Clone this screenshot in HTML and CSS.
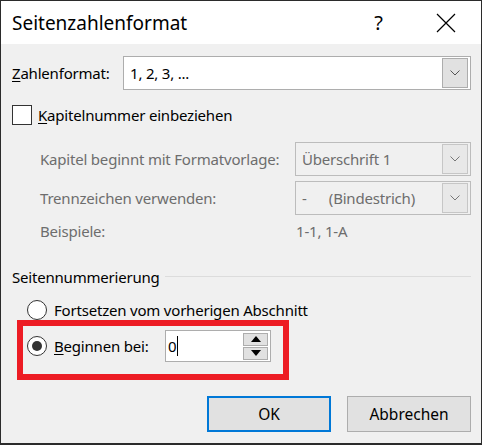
FILE: index.html
```html
<!DOCTYPE html>
<html lang="de">
<head>
<meta charset="UTF-8">
<title>Seitenzahlenformat</title>
<link rel="stylesheet" href="styles.css">
</head>
<body>
    <div class="window">
        <div class="titlebar">
            <span class="title">Seitenzahlenformat</span>
            <span class="help">?</span>
            <svg class="close" width="20" height="20" viewBox="0 0 20 20">
                <path d="M1 1 L19 19 M19 1 L1 19" stroke="#000" stroke-width="1.2" fill="none"/>
            </svg>
        </div>

        <div class="content">
            <div class="row row-format">
                <span class="label-main"><u>Z</u>ahlenformat:</span>
                <div class="combo">
                    <span class="combo-text">1, 2, 3, ...</span>
                    <span class="combo-btn">
                        <svg width="10" height="6" viewBox="0 0 10 6"><path d="M0.5 0.5 L5 5 L9.5 0.5" stroke="#555" fill="none"/></svg>
                    </span>
                </div>
            </div>

            <div class="row row-check">
                <span class="checkbox"></span>
                <span><u>K</u>apitelnummer einbeziehen</span>
            </div>

            <div class="row row-sub row-style">
                <span class="label-sub">Kapitel beginnt mit Formatvorlage:</span>
                <div class="combo combo-disabled">
                    <span class="combo-text">Überschrift 1</span>
                    <span class="combo-btn">
                        <svg width="10" height="6" viewBox="0 0 10 6"><path d="M0.5 0.5 L5 5 L9.5 0.5" stroke="#777" fill="none"/></svg>
                    </span>
                </div>
            </div>

            <div class="row row-sub row-sep">
                <span class="label-sub">Trennzeichen verwenden:</span>
                <div class="combo combo-disabled">
                    <span class="combo-text">-&nbsp;&nbsp;&nbsp;&nbsp;&nbsp;&nbsp;(Bindestrich)</span>
                    <span class="combo-btn">
                        <svg width="10" height="6" viewBox="0 0 10 6"><path d="M0.5 0.5 L5 5 L9.5 0.5" stroke="#777" fill="none"/></svg>
                    </span>
                </div>
            </div>

            <div class="row row-sub row-examples">
                <span class="label-sub">Beispiele:</span>
                <span class="examples">1-1, 1-A</span>
            </div>

            <div class="group-head">
                <span>Seitennummerierung</span>
                <span class="group-line"></span>
            </div>

            <div class="row row-radio">
                <span class="radio"></span>
                <span>Fortsetzen vom vorherigen Abschnitt</span>
            </div>

            <div class="highlight">
                <div class="row row-radio">
                    <span class="radio radio-on"></span>
                    <span class="label-start"><u>B</u>eginnen bei:</span>
                    <div class="spin">
                        <span class="spin-text">0<span class="caret"></span></span>
                        <div class="spin-btns">
                            <span class="spin-btn">
                                <svg width="10" height="6" viewBox="0 0 10 6"><path d="M0 6 L5 0 L10 6 Z" fill="#000"/></svg>
                            </span>
                            <span class="spin-btn">
                                <svg width="10" height="6" viewBox="0 0 10 6"><path d="M0 0 L10 0 L5 6 Z" fill="#000"/></svg>
                            </span>
                        </div>
                    </div>
                </div>
            </div>

            <div class="buttons">
                <button type="button" class="btn btn-default">OK</button>
                <button type="button" class="btn">Abbrechen</button>
            </div>
        </div>
    </div>
</body>
</html>
```

FILE: styles.css
```css
body {
    margin: 0;
    padding: 0;
    font-family: "Noto Sans", "Open Sans", sans-serif;
    font-size: 15px;
    letter-spacing: -0.2px;
    color: #000;
}

.window {
    width: 482px;
    height: 445px;
    box-sizing: border-box;
    border: 1px solid #2b2b2b;
    border-bottom-width: 2px;
    background: #f0f0f0;
    overflow: hidden;
}

u {
    text-decoration-thickness: 1px;
    text-underline-offset: 2px;
}

.titlebar {
    height: 43px;
    background: #fff;
    display: flex;
    align-items: center;
    padding-left: 11px;
    letter-spacing: 0;
}

.title {
    font-size: 19px;
    flex: 1;
}

.help {
    font-size: 20px;
    margin-right: 53px;
}

.close {
    margin-right: 25px;
}

.content {
    padding: 0 10px 0 11px;
}

.row {
    display: flex;
    align-items: center;
}

.row-format {
    margin-top: 12px;
    height: 34px;
}

.label-main {
    width: 111px;
}

.combo {
    flex: 1;
    height: 34px;
    box-sizing: border-box;
    border: 1px solid #adadad;
    background: #fff;
    display: flex;
    align-items: center;
    padding: 0 2px 0 6px;
}

.combo-text {
    flex: 1;
}

.combo-btn {
    width: 26px;
    height: 30px;
    box-sizing: border-box;
    border: 1px solid #adadad;
    background: #e1e1e1;
    display: flex;
    justify-content: center;
    align-items: center;
}

.combo-disabled {
    background: #f0f0f0;
    border-color: #bcbcbc;
    color: #6d6d6d;
}

.combo-disabled .combo-btn {
    border-color: #c6c6c6;
    background: #e8e8e8;
}

.row-check {
    margin-top: 15px;
    height: 20px;
}

.checkbox {
    width: 20px;
    height: 20px;
    box-sizing: border-box;
    border: 1px solid #333;
    background: #fff;
    margin-right: 6px;
}

.row-sub {
    color: #6d6d6d;
    padding-left: 28px;
}

.label-sub {
    width: 255px;
}

.row-style {
    margin-top: 17px;
}

.row-sep {
    margin-top: 5px;
}

.row-examples {
    height: 32px;
}

.examples {
    padding-left: 1px;
}

.group-head {
    display: flex;
    align-items: center;
    margin-top: 20px;
    height: 20px;
}

.group-line {
    flex: 1;
    height: 1px;
    background: #dcdcdc;
    margin-left: 5px;
    margin-top: -2px;
}

.row-radio {
    height: 20px;
    margin-top: 13px;
    padding-left: 15px;
}

.radio {
    width: 20px;
    height: 20px;
    box-sizing: border-box;
    border: 1px solid #333;
    border-radius: 50%;
    background: #fff;
    margin-right: 7px;
    display: flex;
    justify-content: center;
    align-items: center;
}

.radio-on::after {
    content: "";
    width: 10px;
    height: 10px;
    border-radius: 50%;
    background: #333;
}

.highlight {
    width: 272px;
    height: 60px;
    box-sizing: border-box;
    border: 6px solid #ed1c24;
    margin-left: 5px;
}

.highlight .row-radio {
    margin-top: 4px;
    padding-left: 4px;
    height: 32px;
}

.label-start {
    width: 111px;
}

.spin {
    width: 106px;
    height: 32px;
    box-sizing: border-box;
    border: 1px solid #adadad;
    background: #fff;
    display: flex;
    align-items: center;
    padding-left: 2px;
}

.spin-text {
    flex: 1;
    display: flex;
    align-items: center;
}

.caret {
    display: inline-block;
    width: 1px;
    height: 20px;
    background: #000;
    margin-left: 1px;
}

.spin-btns {
    display: flex;
    flex-direction: column;
    gap: 1px;
    margin-right: 2px;
}

.spin-btn {
    width: 25px;
    height: 13px;
    box-sizing: border-box;
    border: 1px solid #adadad;
    background: #e1e1e1;
    display: flex;
    justify-content: center;
    align-items: center;
}

.buttons {
    display: flex;
    justify-content: flex-end;
    gap: 16px;
    margin-top: 16px;
}

.btn {
    width: 124px;
    height: 36px;
    box-sizing: border-box;
    border: 1px solid #adadad;
    background: #e1e1e1;
    font-family: "Noto Sans", "Open Sans", sans-serif;
    font-size: 15.5px;
    color: #000;
    padding: 0;
}

.btn-default {
    border: 2px solid #0078d7;
}
```
